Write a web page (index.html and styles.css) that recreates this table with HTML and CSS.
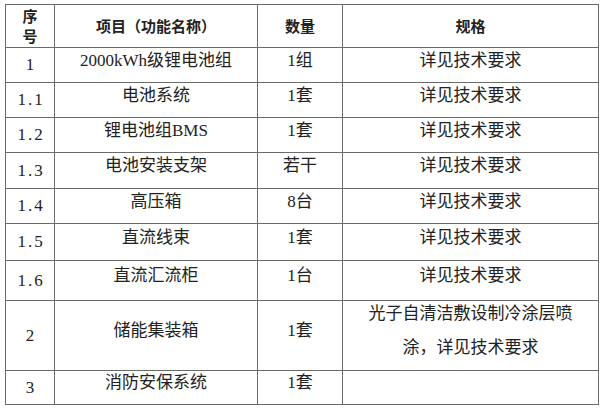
FILE: index.html
```html
<!DOCTYPE html>
<html lang="zh-CN">
<head>
<meta charset="utf-8">
<title>设备清单</title>
<link rel="stylesheet" href="styles.css">
</head>
<body>
<table class="spec">
  <colgroup>
    <col class="c-no">
    <col class="c-name">
    <col class="c-qty">
    <col class="c-spec">
  </colgroup>
  <thead>
    <tr class="r-head">
      <th class="no">序<br>号</th>
      <th>项目（功能名称）</th>
      <th>数量</th>
      <th>规格</th>
    </tr>
  </thead>
  <tbody>
    <tr class="r35">
      <td class="no">1</td>
      <td>2000kWh级锂电池组</td>
      <td>1组</td>
      <td>详见技术要求</td>
    </tr>
    <tr class="r35">
      <td class="no">1.1</td>
      <td>电池系统</td>
      <td>1套</td>
      <td>详见技术要求</td>
    </tr>
    <tr class="r35">
      <td class="no">1.2</td>
      <td>锂电池组BMS</td>
      <td>1套</td>
      <td>详见技术要求</td>
    </tr>
    <tr class="r36">
      <td class="no">1.3</td>
      <td>电池安装支架</td>
      <td>若干</td>
      <td>详见技术要求</td>
    </tr>
    <tr class="r35">
      <td class="no">1.4</td>
      <td>高压箱</td>
      <td>8台</td>
      <td>详见技术要求</td>
    </tr>
    <tr class="r37">
      <td class="no">1.5</td>
      <td>直流线束</td>
      <td>1套</td>
      <td>详见技术要求</td>
    </tr>
    <tr class="r40">
      <td class="no">1.6</td>
      <td>直流汇流柜</td>
      <td>1台</td>
      <td>详见技术要求</td>
    </tr>
    <tr class="r70">
      <td class="no">2</td>
      <td>储能集装箱</td>
      <td>1套</td>
      <td class="multi"><div class="multi-text">光子自清洁敷设制冷涂层喷<br>涂，详见技术要求</div></td>
    </tr>
    <tr class="r34">
      <td class="no">3</td>
      <td>消防安保系统</td>
      <td>1套</td>
      <td></td>
    </tr>
  </tbody>
</table>
<p class="note">具体设备配置及技术参数以最终设计方案为准，供货范围详见技术规范书要求。</p>
</body>
</html>
```

FILE: styles.css
```css
html, body {
  margin: 0;
  padding: 0;
  background: #ffffff;
}

body {
  color: #222222;
  font-family: "Liberation Serif", "Noto Sans CJK SC", serif;
  font-size: 17px;
  overflow: hidden;
}

.spec {
  margin: 4px 0 0 5px;
  border-collapse: collapse;
  table-layout: fixed;
  width: 593px;
}

.c-no { width: 49px; }
.c-name { width: 203px; }
.c-qty { width: 85px; }
.c-spec { width: 256px; }

.spec th,
.spec td {
  border: 1px solid #6a6a6a;
  padding: 0 0 9px 0;
  text-align: center;
  vertical-align: middle;
  line-height: 22px;
  white-space: nowrap;
}

.spec th {
  font-family: "Noto Sans CJK SC", sans-serif;
  font-weight: bold;
  font-size: 15px;
  padding: 0;
  line-height: 20px;
}

.spec td.no {
  padding: 0 0 0 2px;
  letter-spacing: 2px;
}

.spec td.multi {
  line-height: 34px;
  padding: 0;
}

.multi-text {
  margin-top: -10px;
}

.r-head { height: 43px; }
.r34 { height: 34px; }
.r35 { height: 35px; }
.r36 { height: 36px; }
.r37 { height: 37px; }
.r40 { height: 40px; }
.r70 { height: 70px; }

.note {
  margin: 0 0 0 13px;
  font-family: "Noto Sans CJK SC", sans-serif;
  font-size: 16px;
  line-height: 22px;
  white-space: nowrap;
}
```
